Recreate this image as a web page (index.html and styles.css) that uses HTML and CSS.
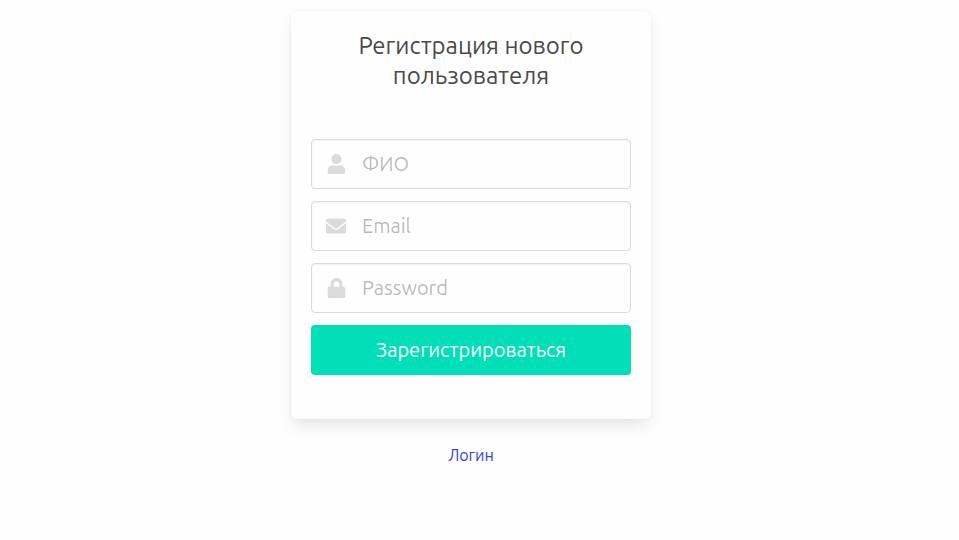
FILE: index.html
```html
<!DOCTYPE html>
<html lang="ru">
<head>
<meta charset="utf-8">
<meta name="viewport" content="width=device-width, initial-scale=1">
<title>Регистрация нового пользователя</title>
<link rel="stylesheet" href="styles.css">
</head>
<body>
<main class="page">
  <form class="box">
    <h1 class="title">Регистрация нового пользователя</h1>
    <div class="field">
      <input class="input" type="text" placeholder="ФИО" aria-label="ФИО">
      <svg class="icon" viewBox="-44 0 512 512" aria-hidden="true"><path d="M224 256c70.700 0 128-57.300 128-128S294.700 0 224 0 96 57.300 96 128s57.300 128 128 128zm89.600 32h-16.700c-22.200 10.200-46.900 16-72.900 16s-50.600-5.800-72.900-16h-16.700C60.200 288 0 348.200 0 422.400V464c0 26.500 21.500 48 48 48h352c26.500 0 48-21.500 48-48v-41.600c0-74.200-60.200-134.400-134.400-134.400z"/></svg>
    </div>
    <div class="field">
      <input class="input" type="email" placeholder="Email" aria-label="Email">
      <svg class="icon" viewBox="0 0 512 512" aria-hidden="true"><path d="M502.300 190.800c3.900-3.100 9.700-.2 9.700 4.700V400c0 26.500-21.500 48-48 48H48c-26.500 0-48-21.500-48-48V195.600c0-5 5.700-7.800 9.700-4.700 22.400 17.400 52.100 39.500 154.100 113.600 21.100 15.400 56.700 47.800 92.200 47.600 35.700.3 72-32.800 92.300-47.600 102-74.100 131.600-96.300 154-113.700zM256 320c23.200.4 56.600-29.200 73.400-41.400 132.700-96.300 142.800-104.700 173.400-128.700 5.800-4.500 9.200-11.500 9.200-18.900v-19c0-26.500-21.500-48-48-48H48c-26.500 0-48 21.500-48 48v19c0 7.400 3.400 14.300 9.200 18.900 30.600 23.900 40.700 32.400 173.400 128.700 16.800 12.200 50.200 41.800 73.400 41.400z"/></svg>
    </div>
    <div class="field">
      <input class="input" type="password" placeholder="Password" aria-label="Password">
      <svg class="icon" viewBox="-44 0 512 512" aria-hidden="true"><path d="M400 224h-24v-72C376 68.200 307.800 0 224 0S72 68.200 72 152v72H48c-26.500 0-48 21.500-48 48v192c0 26.500 21.500 48 48 48h352c26.500 0 48-21.500 48-48V272c0-26.500-21.500-48-48-48zm-104 0H152v-72c0-39.700 32.300-72 72-72s72 32.300 72 72v72z"/></svg>
    </div>
    <button class="button" type="submit">Зарегистрироваться</button>
  </form>
  <a class="link" href="#">Логин</a>
</main>
</body>
</html>
```
FILE: styles.css
```css
* {
  box-sizing: border-box;
}

body {
  margin: 0;
  background: #fefefe;
  color: #4a4a4a;
  font-family: Ubuntu, "Noto Sans", sans-serif;
  font-size: 16px;
  line-height: 24px;
}

.page {
  display: flex;
  flex-direction: column;
  align-items: center;
  padding: 11px 17px 0 0;
}

.box {
  display: flex;
  flex-direction: column;
  gap: 12px;
  width: 100%;
  max-width: 360px;
  padding: 20px 20px 44px;
  border-radius: 6px;
  background: #fefefe;
  box-shadow: 0 8px 16px -2px rgba(10, 10, 10, 0.1), 0 0 0 1px rgba(10, 10, 10, 0.02);
}

.title {
  margin: 0 0 36px;
  font-size: 24px;
  font-weight: 400;
  line-height: 30px;
  text-align: center;
}

.field {
  position: relative;
}

.input {
  display: block;
  width: 100%;
  height: 50px;
  padding: 0 16px 2px 50px;
  border: 1px solid #dbdbdb;
  border-radius: 4px;
  background: #fefefe;
  box-shadow: inset 0 1px 2px rgba(10, 10, 10, 0.05);
  color: #363636;
  font: inherit;
  font-size: 20px;
}

.input::placeholder {
  color: rgba(54, 54, 54, 0.35);
  opacity: 1;
}

.input:focus {
  outline: none;
  border-color: #485fc7;
}

.icon {
  position: absolute;
  top: 15px;
  left: 15px;
  width: 20px;
  height: 20px;
  fill: #dbdbdb;
  pointer-events: none;
}

.button {
  height: 50px;
  border: 0;
  border-radius: 4px;
  background: #00dfb8;
  color: #fff;
  font: inherit;
  font-size: 20px;
  cursor: pointer;
}

.link {
  margin-top: 24px;
  color: #3444dc;
  text-decoration: none;
}
```
